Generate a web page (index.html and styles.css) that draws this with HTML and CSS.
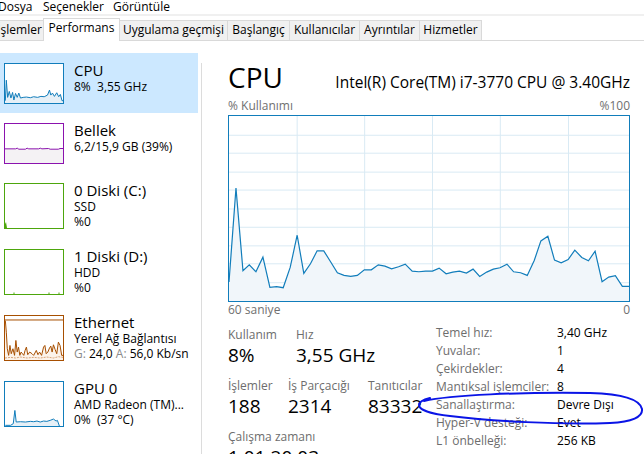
FILE: index.html
```html
<!DOCTYPE html>
<html lang="tr">
<head>
<meta charset="utf-8">
<title>Görev Yöneticisi</title>
<link rel="stylesheet" href="styles.css">
</head>
<body>
<div class="app">
  <nav class="menubar">
    <span class="menu m-dosya">Dosya</span>
    <span class="menu m-secenek">Seçenekler</span>
    <span class="menu">Görüntüle</span>
  </nav>
  <div class="sep"></div>
  <div class="tabs">
    <div class="tab t-islemler">İşlemler</div>
    <div class="tab active t-perf">Performans</div>
    <div class="tab t-uyg">Uygulama geçmişi</div>
    <div class="tab t-bas">Başlangıç</div>
    <div class="tab t-kul">Kullanıcılar</div>
    <div class="tab t-ayr">Ayrıntılar</div>
    <div class="tab t-hiz">Hizmetler</div>
  </div>
  <div class="main">
    <aside class="sidebar">
      <div class="item selected">
        <div class="thumb cpu">
          <svg viewBox="13 39 176 118" preserveAspectRatio="none">
            <polygon class="fill-cpu" points="13,157 14,150 17,88 21,140 26,122 31,142 36,125 40,148 45,128 50,140 55,127 60,142 68,140 78,139 90,141 100,138 112,140 122,137 132,138 142,133 148,118 152,133 157,127 163,137 170,126 176,138 181,131 186,150 189,150 189,157"/>
            <polyline class="ln-cpu" points="14,150 17,88 21,140 26,122 31,142 36,125 40,148 45,128 50,140 55,127 60,142 68,140 78,139 90,141 100,138 112,140 122,137 132,138 142,133 148,118 152,133 157,127 163,137 170,126 176,138 181,131 186,150 189,150"/>
          </svg>
        </div>
        <div class="item-text">
          <div class="item-title">CPU</div>
          <div class="item-sub">8%&nbsp; 3,55 GHz</div>
        </div>
      </div>
      <div class="item">
        <div class="thumb mem">
          <svg viewBox="13 221 176 113" preserveAspectRatio="none">
            <polygon class="fill-mem" points="13,334 13,293 45,293 50,291 55,294 75,294 80,291 85,293 115,293 120,291 125,293 145,292 150,294 175,294 180,292 189,292 189,334"/>
            <polyline class="ln-mem" points="13,293 45,293 50,291 55,294 75,294 80,291 85,293 115,293 120,291 125,293 145,292 150,294 175,294 180,292 189,292"/>
          </svg>
        </div>
        <div class="item-text">
          <div class="item-title">Bellek</div>
          <div class="item-sub">6,2/15,9 GB (39%)</div>
        </div>
      </div>
      <div class="item tall">
        <div class="thumb disk">
          <svg viewBox="0 0 58 44" preserveAspectRatio="none">
            <polygon class="fill-disk" points="0,44 0,40 1,38 2,44"/>
          </svg>
        </div>
        <div class="item-text">
          <div class="item-title">0 Diski (C:)</div>
          <div class="item-sub">SSD</div>
          <div class="item-sub">%0</div>
        </div>
      </div>
      <div class="item tall">
        <div class="thumb disk">
          <svg viewBox="0 0 58 44" preserveAspectRatio="none">
            <line class="ln-disk" x1="9" y1="44" x2="9" y2="42.5"/>
            <line class="ln-disk" x1="44" y1="44" x2="44" y2="42.5"/>
            <line class="ln-disk" x1="54" y1="44" x2="54" y2="42.5"/>
          </svg>
        </div>
        <div class="item-text">
          <div class="item-title">1 Diski (D:)</div>
          <div class="item-sub">HDD</div>
          <div class="item-sub">%0</div>
        </div>
      </div>
      <div class="item tall">
        <div class="thumb eth">
          <svg viewBox="13 31 176 133" preserveAspectRatio="none">
            <polygon class="fill-eth" points="13,164 14,45 17,80 20,130 24,150 28,120 32,145 37,130 42,150 46,105 50,140 54,125 58,150 62,140 66,145 70,150 74,135 78,125 82,148 88,140 95,145 100,150 108,135 113,148 118,140 124,150 130,125 134,120 138,145 143,140 148,128 152,122 156,140 160,118 165,132 170,145 175,110 180,120 185,150 189,150 189,164"/>
            <line class="ln-eth" x1="13" y1="43" x2="189" y2="43"/>
            <polyline class="ln-eth2" points="13,158 30,156 45,158 60,155 80,158 100,156 120,158 140,155 160,158 175,154 189,156"/>
            <polyline class="ln-eth" points="14,45 17,80 20,130 24,150 28,120 32,145 37,130 42,150 46,105 50,140 54,125 58,150 62,140 66,145 70,150 74,135 78,125 82,148 88,140 95,145 100,150 108,135 113,148 118,140 124,150 130,125 134,120 138,145 143,140 148,128 152,122 156,140 160,118 165,132 170,145 175,110 180,120 185,150 189,150"/>
          </svg>
        </div>
        <div class="item-text">
          <div class="item-title">Ethernet</div>
          <div class="item-sub">Yerel Ağ Bağlantısı</div>
          <div class="item-sub"><span class="dim">G:</span> 24,0 <span class="dim">A:</span> 56,0 Kb/sn</div>
        </div>
      </div>
      <div class="item tall">
        <div class="thumb gpu">
          <svg viewBox="13 64 176 133" preserveAspectRatio="none">
            <polygon class="fill-cpu" points="14,197 14,195 30,195 38,190 43,150 47,185 60,184 75,185 90,183 100,184 110,182 120,185 130,182 140,183 150,180 160,176 168,182 172,180 178,197"/>
            <polyline class="ln-cpu" points="14,195 30,195 38,190 43,150 47,185 60,184 75,185 90,183 100,184 110,182 120,185 130,182 140,183 150,180 160,176 168,182 172,180 178,197"/>
          </svg>
        </div>
        <div class="item-text">
          <div class="item-title">GPU 0</div>
          <div class="item-sub">AMD Radeon (TM)...</div>
          <div class="item-sub">0%&nbsp; (37 °C)</div>
        </div>
      </div>
    </aside>
    <div class="divider"></div>
    <section class="detail">
      <div class="title-row">
        <div class="cpu-title">CPU</div>
        <div class="cpu-name">Intel(R) Core(TM) i7-3770 CPU @ 3.40GHz</div>
      </div>
      <div class="axis-row top">
        <span>% Kullanımı</span>
        <span>%100</span>
      </div>
      <div class="graph">
        <svg viewBox="25 15 1203 557" preserveAspectRatio="none">
          <g class="grid">
            <line x1="230" y1="0" x2="230" y2="600"/>
            <line x1="433" y1="0" x2="433" y2="600"/>
            <line x1="637" y1="0" x2="637" y2="600"/>
            <line x1="841" y1="0" x2="841" y2="600"/>
            <line x1="1046" y1="0" x2="1046" y2="600"/>
            <line x1="0" y1="73" x2="1300" y2="73"/>
            <line x1="0" y1="127" x2="1300" y2="127"/>
            <line x1="0" y1="184" x2="1300" y2="184"/>
            <line x1="0" y1="238" x2="1300" y2="238"/>
            <line x1="0" y1="295" x2="1300" y2="295"/>
            <line x1="0" y1="350" x2="1300" y2="350"/>
            <line x1="0" y1="406" x2="1300" y2="406"/>
            <line x1="0" y1="460" x2="1300" y2="460"/>
            <line x1="0" y1="517" x2="1300" y2="517"/>
          </g>
          <polygon class="fill-main" points="25,572 25,515 46,232 67,481 86,463 106,484 127,440 148,531 168,529 188,532 209,471 230,374 250,489 270,460 290,421 310,421 330,453 351,487 371,495 391,498 411,495 432,478 453,478 474,463 494,467 514,475 535,469 555,461 576,482 596,484 616,482 637,482 657,473 678,490 698,485 718,482 739,488 759,476 779,498 800,485 820,476 840,472 861,461 881,484 902,487 922,495 943,450 963,391 984,377 1004,449 1024,457 1045,447 1065,419 1086,441 1106,451 1126,422 1147,514 1167,500 1187,496 1208,528 1228,528 1228,572"/>
          <polyline class="ln-main" points="25,515 46,232 67,481 86,463 106,484 127,440 148,531 168,529 188,532 209,471 230,374 250,489 270,460 290,421 310,421 330,453 351,487 371,495 391,498 411,495 432,478 453,478 474,463 494,467 514,475 535,469 555,461 576,482 596,484 616,482 637,482 657,473 678,490 698,485 718,482 739,488 759,476 779,498 800,485 820,476 840,472 861,461 881,484 902,487 922,495 943,450 963,391 984,377 1004,449 1024,457 1045,447 1065,419 1086,441 1106,451 1126,422 1147,514 1167,500 1187,496 1208,528 1228,528"/>
        </svg>
      </div>
      <div class="axis-row">
        <span>60 saniye</span>
        <span>0</span>
      </div>
      <div class="stats">
        <div class="stats-left">
          <div class="stat-row">
            <div class="stat w68">
              <div class="stat-label">Kullanım</div>
              <div class="stat-value">8%</div>
            </div>
            <div class="stat">
              <div class="stat-label">Hız</div>
              <div class="stat-value">3,55 GHz</div>
            </div>
          </div>
          <div class="stat-row">
            <div class="stat w60">
              <div class="stat-label">İşlemler</div>
              <div class="stat-value">188</div>
            </div>
            <div class="stat w80">
              <div class="stat-label">İş Parçacığı</div>
              <div class="stat-value">2314</div>
            </div>
            <div class="stat">
              <div class="stat-label">Tanıtıcılar</div>
              <div class="stat-value">83332</div>
            </div>
          </div>
          <div class="stat-row">
            <div class="stat">
              <div class="stat-label">Çalışma zamanı</div>
              <div class="stat-value">1:01:20:03</div>
            </div>
          </div>
        </div>
        <dl class="specs">
          <dt>Temel hız:</dt><dd>3,40 GHz</dd>
          <dt>Yuvalar:</dt><dd>1</dd>
          <dt>Çekirdekler:</dt><dd>4</dd>
          <dt>Mantıksal işlemciler:</dt><dd>8</dd>
          <dt>Sanallaştırma:</dt><dd>Devre Dışı</dd>
          <dt>Hyper-V desteği:</dt><dd>Evet</dd>
          <dt>L1 önbelleği:</dt><dd>256 KB</dd>
        </dl>
      </div>
    </section>
  </div>
  <svg class="annot" viewBox="0 0 644 454">
    <path d="M 424 401 C 450 395, 520 392, 590 393 C 625 394, 640 400, 642 409 C 643 417, 632 422, 610 423 C 560 425, 490 421, 450 416 C 432 414, 419 410, 419 405 C 419 402, 422 400, 430 398"/>
  </svg>
</div>
</body>
</html>
```
FILE: styles.css
```css
html, body {
  margin: 0;
  padding: 0;
}
body {
  width: 644px;
  height: 454px;
  overflow: hidden;
  background: #ffffff;
  font-family: "Segoe UI", "Open Sans", "Noto Sans", sans-serif;
  font-size: 12px;
  color: #000000;
}
.app {
  position: relative;
  width: 644px;
  height: 454px;
  overflow: hidden;
  display: flex;
  flex-direction: column;
}

/* menu */
.menubar {
  display: flex;
  height: 14px;
  line-height: 14px;
  margin-left: -2px;
  white-space: nowrap;
  flex: none;
}
.menu.m-dosya { width: 45px; }
.menu.m-secenek { width: 70px; }
.sep {
  height: 2px;
  background: #f0f0f0;
  flex: none;
}

/* tabs */
.tabs {
  display: flex;
  align-items: flex-end;
  height: 22px;
  margin-top: 2px;
  border-bottom: 1px solid #d9d9d9;
  flex: none;
}
.tab {
  box-sizing: border-box;
  height: 20px;
  line-height: 16px;
  padding-top: 1px;
  border: 1px solid #d9d9d9;
  border-bottom: none;
  background: #f0f0f0;
  text-align: center;
  white-space: nowrap;
  margin-left: -1px;
}
.tab.active {
  height: 23px;
  background: #ffffff;
  margin-bottom: -1px;
  position: relative;
  z-index: 1;
}
.t-islemler { width: 49px; margin-left: -5px; }
.t-perf { width: 77px; }
.t-uyg { width: 109px; }
.t-bas { width: 63px; }
.t-kul { width: 71px; }
.t-ayr { width: 61px; }
.t-hiz { width: 63px; }

/* main */
.main {
  display: flex;
  flex: 1;
  min-height: 0;
}
.sidebar {
  width: 198px;
  flex: none;
  padding-top: 12px;
}
.item {
  box-sizing: border-box;
  height: 60px;
  padding: 10px 0 0 4px;
  display: flex;
  gap: 10px;
}
.item.tall { height: 66px; }
.item.selected { background: #cce8ff; }
.thumb {
  box-sizing: border-box;
  width: 60px;
  height: 41px;
  border: 1px solid #117dbb;
  background: #ffffff;
  flex: none;
}
.item.tall .thumb { height: 46px; }
.thumb svg {
  display: block;
  width: 100%;
  height: 100%;
}
.thumb.mem { border-color: #8b12ae; }
.thumb.disk { border-color: #4da60c; }
.thumb.eth { border-color: #a74f01; }
.thumb.gpu { border-color: #117dbb; }

.item-text {
  white-space: nowrap;
}
.item-title {
  font-size: 15px;
  line-height: 18px;
  margin-top: -2px;
}
.item-sub {
  font-size: 12px;
  line-height: 15px;
}
.dim { color: #8a8a8a; }

polyline, line, polygon, path {
  vector-effect: non-scaling-stroke;
}
.ln-cpu { fill: none; stroke: #117dbb; stroke-width: 1; }
.fill-cpu { fill: #e6f0f7; stroke: none; }
.ln-mem { fill: none; stroke: #8b12ae; stroke-width: 1; }
.fill-mem { fill: #f4f2f4; stroke: none; }
.fill-disk { fill: #4da60c; }
.ln-disk { stroke: #4da60c; stroke-width: 1; }
.ln-eth { fill: none; stroke: #a74f01; stroke-width: 1; }
.ln-eth2 { fill: none; stroke: #d9a57a; stroke-width: 1; stroke-dasharray: 2 1; }
.fill-eth { fill: #fcf3eb; stroke: none; }

.divider {
  width: 1px;
  margin-left: 3px;
  margin-top: 22px;
  background: #dcdcdc;
  flex: none;
}

/* detail */
.detail {
  flex: 1;
  padding: 18px 14px 0 26px;
  min-width: 0;
}
.title-row {
  display: flex;
  justify-content: space-between;
  align-items: baseline;
  height: 36px;
  white-space: nowrap;
}
.cpu-title {
  font-size: 28px;
  line-height: 36px;
}
.cpu-name {
  font-size: 15.5px;
  line-height: 20px;
}
.axis-row {
  display: flex;
  justify-content: space-between;
  color: #707070;
  font-size: 12px;
  line-height: 16px;
}
.axis-row.top {
  margin-top: 3px;
  margin-bottom: 1px;
}
.graph {
  box-sizing: border-box;
  width: 402px;
  height: 187px;
  border: 1px solid #117dbb;
}
.graph svg {
  display: block;
  width: 100%;
  height: 100%;
}
.grid line {
  stroke: #d9eaf4;
  stroke-width: 1;
}
.fill-main { fill: #f1f6fa; stroke: none; }
.ln-main { fill: none; stroke: #117dbb; stroke-width: 1.2; }

.stats {
  display: flex;
  align-items: flex-start;
  margin-top: 8px;
}
.stats-left {
  width: 208px;
  flex: none;
}
.stat-row {
  display: flex;
  margin-bottom: 9px;
}
.stat { white-space: nowrap; }
.w68 { width: 68px; }
.w60 { width: 60px; }
.w80 { width: 80px; }
.stat-label {
  color: #6d6d6d;
  line-height: 17px;
}
.stat-value {
  font-size: 19px;
  line-height: 25px;
}
.specs {
  margin: -2px 0 0 0;
  display: grid;
  grid-template-columns: 121px auto;
  grid-auto-rows: 18px;
  align-content: start;
  line-height: 18px;
  white-space: nowrap;
}
.specs dt { color: #6d6d6d; }
.specs dd { margin: 0; }

/* hand-drawn annotation */
.annot {
  position: absolute;
  left: 0;
  top: 0;
  width: 644px;
  height: 454px;
  pointer-events: none;
}
.annot path {
  fill: none;
  stroke: #0a14e6;
  stroke-width: 2;
  stroke-linecap: round;
}
```
